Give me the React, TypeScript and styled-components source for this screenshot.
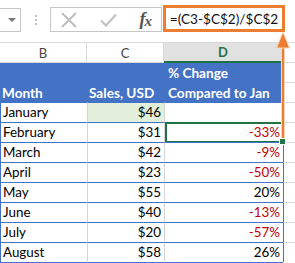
import styled, { createGlobalStyle } from 'styled-components'

const GlobalStyle = createGlobalStyle`
  body {
    margin: 0;
    background: #fff;
    font-family: Lato, "Open Sans", sans-serif;
  }
`

const rows = [
  { month: 'January', sales: '$46', change: '' },
  { month: 'February', sales: '$31', change: '-33%' },
  { month: 'March', sales: '$42', change: '-9%' },
  { month: 'April', sales: '$23', change: '-50%' },
  { month: 'May', sales: '$55', change: '20%' },
  { month: 'June', sales: '$40', change: '-13%' },
  { month: 'July', sales: '$20', change: '-57%' },
  { month: 'August', sales: '$58', change: '26%' },
]

const COLS = '87px 77px 119px 1fr'

export default function App() {
  return (
    <Page>
      <GlobalStyle />

      {/* Formula bar */}
      <Toolbar>
        <NameBox>
          <Caret />
        </NameBox>
        <Dots>
          <Dot />
          <Dot />
          <Dot />
        </Dots>
        <ButtonsBox>
          <svg width="16" height="16" viewBox="0 0 16 16">
            <path d="M1 1L15 15M15 1L1 15" stroke="#bdbdbd" strokeWidth="1.8" fill="none" />
          </svg>
          <svg width="17" height="14" viewBox="0 0 17 14">
            <path d="M1 7.5L6 12.5L16 1.5" stroke="#c4c4c4" strokeWidth="2.4" fill="none" />
          </svg>
          <Fx>
            f<sub>x</sub>
          </Fx>
        </ButtonsBox>
        <FormulaInput>=(C3-$C$2)/$C$2</FormulaInput>
      </Toolbar>

      {/* Column letters */}
      <ColumnHeaders>
        <ColLetter>B</ColLetter>
        <ColLetter>C</ColLetter>
        <ColLetter active>D</ColLetter>
        <ColLetter blank />
      </ColumnHeaders>

      {/* Table header */}
      <HeaderRow>
        <HeadCell>Month</HeadCell>
        <HeadCell>Sales, USD</HeadCell>
        <HeadCell>
          % Change
          <br />
          Compared to Jan
        </HeadCell>
        <SpareHead />
      </HeaderRow>

      {rows.map((r, i) => (
        <DataRow key={r.month}>
          <Cell>{r.month}</Cell>
          <Cell right divider tint={i === 0}>
            {r.sales}
          </Cell>
          <Cell right divider selected={i === 1} negative={r.change.startsWith('-')}>
            {r.change}
          </Cell>
          <SpareCell />
        </DataRow>
      ))}

      <Arrow width="16" height="112" viewBox="0 0 16 112">
        <path d="M8 14V110" stroke="#fbd5bc" strokeWidth="4" />
        <path d="M8 14V110" stroke="#ed7d31" strokeWidth="2" />
        <path d="M8 1L14.5 17H1.5Z" fill="#ed7d31" stroke="#fbd5bc" strokeWidth="1" />
      </Arrow>
    </Page>
  )
}

const Page = styled.div`
  position: relative;
  width: 295px;
  height: 263px;
  overflow: hidden;
  background: #fff;
`

const Toolbar = styled.div`
  display: flex;
  align-items: flex-start;
  height: 43px;
  box-sizing: border-box;
  border-bottom: 1px solid #d9d9d9;
`

const NameBox = styled.div`
  margin-top: 8px;
  margin-left: -2px;
  width: 23px;
  height: 24px;
  box-sizing: border-box;
  border: 1px solid #c6c6c6;
  display: flex;
  align-items: center;
  justify-content: center;
`

const Caret = styled.div`
  width: 0;
  height: 0;
  border-left: 4px solid transparent;
  border-right: 4px solid transparent;
  border-top: 4px solid #777;
  margin-left: 4px;
`

const Dots = styled.div`
  width: 29px;
  margin-top: 15px;
  display: flex;
  flex-direction: column;
  align-items: center;
  gap: 2px;
`

const Dot = styled.div`
  width: 2px;
  height: 2px;
  background: #bdbdbd;
`

const ButtonsBox = styled.div`
  margin-top: 7px;
  width: 112px;
  height: 25px;
  box-sizing: border-box;
  border: 1px solid #c6c6c6;
  display: flex;
  align-items: center;
  justify-content: space-between;
  padding: 0 10px 0 10px;
`

const Fx = styled.span`
  font-family: "Liberation Serif", serif;
  font-style: italic;
  font-weight: 700;
  font-size: 18px;
  color: #555;
  line-height: 1;
  letter-spacing: -1px;

  sub {
    font-size: 15px;
    vertical-align: -1px;
  }
`

const FormulaInput = styled.div`
  margin-top: 5px;
  margin-left: 1px;
  width: 122px;
  height: 27px;
  box-sizing: border-box;
  border: 3px solid #ed7d31;
  font-family: Lato, sans-serif;
  font-size: 13.6px;
  color: #111;
  display: flex;
  align-items: center;
  justify-content: center;
  white-space: nowrap;
`

const ColumnHeaders = styled.div`
  display: grid;
  grid-template-columns: ${COLS};
  height: 20px;
`

const ColLetter = styled.div<{ active?: boolean; blank?: boolean }>`
  display: flex;
  align-items: center;
  justify-content: center;
  font-size: 13px;
  box-sizing: border-box;
  border-right: 1px solid #d9d9d9;
  color: ${({ active }) => (active ? '#217346' : '#444')};
  font-weight: ${({ active }) => (active ? 700 : 400)};
  background: ${({ active }) => (active ? '#e1e1e1' : '#fff')};
  border-bottom: ${({ active }) => (active ? '2px solid #217346' : '1px solid #d9d9d9')};
  ${({ blank }) => blank && 'border-right: none;'}
`

const HeaderRow = styled.div`
  display: grid;
  grid-template-columns: ${COLS};
  height: 39px;
`

const HeadCell = styled.div`
  background: #4472c4;
  color: #fff;
  font-weight: 700;
  font-size: 13.6px;
  line-height: 20px;
  padding: 0 2px 1px;
  display: flex;
  align-items: flex-end;
  white-space: nowrap;

  &:nth-child(3) {
    padding-left: 4px;
  }
`

const SpareHead = styled.div`
  background: linear-gradient(#fff 19px, #d9d9d9 19px, #d9d9d9 20px, #fff 20px);
  border-left: 1px solid #4472c4;
`

const DataRow = styled.div`
  display: grid;
  grid-template-columns: ${COLS};
  height: 20px;
`

const Cell = styled.div<{
  right?: boolean
  divider?: boolean
  tint?: boolean
  selected?: boolean
  negative?: boolean
}>`
  position: relative;
  box-sizing: border-box;
  height: 20px;
  padding: 0 3px 0 2px;
  font-size: 13.4px;
  line-height: 19px;
  white-space: nowrap;
  border-top: 1px solid #4472c4;
  display: flex;
  align-items: center;
  justify-content: ${({ right }) => (right ? 'flex-end' : 'flex-start')};
  border-left: 1px solid ${({ divider }) => (divider ? '#d4d4d4' : '#4472c4')};
  background: ${({ tint }) => (tint ? '#e2efda' : '#fff')};
  color: ${({ negative }) => (negative ? '#c00000' : '#000')};

  ${DataRow}:last-of-type & {
    border-bottom: 1px solid #4472c4;
    height: 21px;
  }

  ${({ selected }) =>
    selected &&
    `
    &::after {
      content: '';
      position: absolute;
      left: 0;
      top: -1px;
      right: -1px;
      bottom: -1px;
      border: 2px solid #217346;
    }
    &::before {
      content: '';
      position: absolute;
      right: -3px;
      bottom: -3px;
      width: 5px;
      height: 5px;
      background: #217346;
      border: 1px solid #fff;
      z-index: 1;
    }
  `}
`

const SpareCell = styled.div`
  box-sizing: border-box;
  height: 20px;
  border-left: 1px solid #4472c4;
  border-top: 1px solid #d9d9d9;
`

const Arrow = styled.svg`
  position: absolute;
  left: 275px;
  top: 31px;
`
